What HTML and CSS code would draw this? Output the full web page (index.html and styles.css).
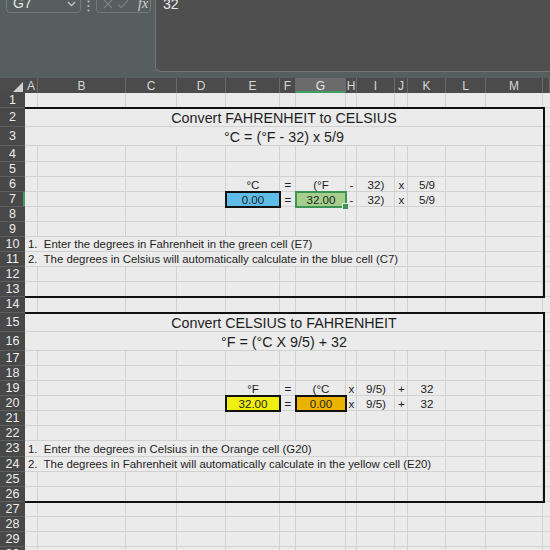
FILE: index.html
```html
<!DOCTYPE html>
<html>
<head>
<meta charset="utf-8">
<title>Temperature conversion</title>
<link rel="stylesheet" href="styles.css">
</head>
<body>
<div class="app">
  <div class="topbar">
    <div class="namebox">
      <span>G7</span>
      <svg class="chev" viewBox="0 0 9 6"><path d="M1 1 L4.5 4.6 L8 1" fill="none" stroke="#c9cccc" stroke-width="1.3"/></svg>
    </div>
    <div class="dots">
      <svg viewBox="0 0 3 13" width="3" height="13"><circle cx="1.5" cy="1.5" r="1.1" fill="#b9bdbd"/><circle cx="1.5" cy="6" r="1.1" fill="#b9bdbd"/><circle cx="1.5" cy="10.5" r="1.1" fill="#b9bdbd"/></svg>
    </div>
    <div class="fxbox">
      <svg class="ico" viewBox="0 0 10 10" width="10" height="10"><path d="M1 1 L9 9 M9 1 L1 9" stroke="#7c8484" stroke-width="1.1" fill="none"/></svg>
      <svg class="ico" viewBox="0 0 12 10" width="12" height="10"><path d="M1 5.5 L4.2 8.6 L11 1.2" stroke="#7c8484" stroke-width="1.1" fill="none"/></svg>
      <span class="fx">fx</span>
    </div>
    <div class="formula"><span>32</span></div>
  </div>

  <div class="sheet">
    <div class="row hdr">
      <div class="corner"><svg viewBox="0 0 10 10" width="10" height="10"><path d="M10 0 L10 10 L0 10 Z" fill="#cfcfcf"/></svg></div>
      <div>A</div><div>B</div><div>C</div><div>D</div><div>E</div><div>F</div><div class="hsel">G</div><div>H</div><div>I</div><div>J</div><div>K</div><div>L</div><div>M</div><div></div>
    </div>

    <div class="row"><div class="rh">1</div></div>

    <div class="box">
      <div class="row tall"><div class="rh">2</div><div class="merge title">Convert FAHRENHEIT to CELSIUS</div></div>
      <div class="row tall"><div class="rh">3</div><div class="merge title">°C = (°F - 32) x 5/9</div></div>
      <div class="row"><div class="rh">4</div></div>
      <div class="row"><div class="rh">5</div></div>
      <div class="row">
        <div class="rh">6</div>
        <div class="c cE">°C</div><div class="c cF">=</div><div class="c cG">(°F</div><div class="c cH">-</div><div class="c cI">32)</div><div class="c cJ">x</div><div class="c cK">5/9</div>
      </div>
      <div class="row">
        <div class="rh rsel">7</div>
        <div class="c cE blue">0.00</div><div class="c cF">=</div><div class="c cG green sel">32.00</div><div class="c cH">-</div><div class="c cI">32)</div><div class="c cJ">x</div><div class="c cK">5/9</div>
      </div>
      <div class="row"><div class="rh">8</div></div>
      <div class="row"><div class="rh">9</div></div>
      <div class="row"><div class="rh">10</div><div class="note toG">1.  Enter the degrees in Fahrenheit in the green cell (E7)</div></div>
      <div class="row"><div class="rh">11</div><div class="note toJ">2.  The degrees in Celsius will automatically calculate in the blue cell (C7)</div></div>
      <div class="row"><div class="rh">12</div></div>
      <div class="row"><div class="rh">13</div></div>
    </div>

    <div class="row"><div class="rh">14</div></div>

    <div class="box">
      <div class="row tall"><div class="rh">15</div><div class="merge title">Convert CELSIUS to FAHRENHEIT</div></div>
      <div class="row tall"><div class="rh">16</div><div class="merge title">°F = (°C X 9/5) + 32</div></div>
      <div class="row"><div class="rh">17</div></div>
      <div class="row"><div class="rh">18</div></div>
      <div class="row">
        <div class="rh">19</div>
        <div class="c cE">°F</div><div class="c cF">=</div><div class="c cG">(°C</div><div class="c cH">x</div><div class="c cI">9/5)</div><div class="c cJ">+</div><div class="c cK">32</div>
      </div>
      <div class="row">
        <div class="rh">20</div>
        <div class="c cE yellow">32.00</div><div class="c cF">=</div><div class="c cG orange">0.00</div><div class="c cH">x</div><div class="c cI">9/5)</div><div class="c cJ">+</div><div class="c cK">32</div>
      </div>
      <div class="row"><div class="rh">21</div></div>
      <div class="row"><div class="rh">22</div></div>
      <div class="row"><div class="rh">23</div><div class="note toG">1.  Enter the degrees in Celsius in the Orange cell (G20)</div></div>
      <div class="row"><div class="rh">24</div><div class="note toK">2.  The degrees in Fahrenheit will automatically calculate in the yellow cell (E20)</div></div>
      <div class="row"><div class="rh">25</div></div>
      <div class="row"><div class="rh">26</div></div>
    </div>

    <div class="row"><div class="rh">27</div></div>
    <div class="row"><div class="rh">28</div></div>
    <div class="row"><div class="rh">29</div></div>
    <div class="row"><div class="rh">30</div></div>
  </div>
</div>
</body>
</html>
```

FILE: styles.css
```css
* { box-sizing: border-box; margin: 0; padding: 0; }

html, body {
  width: 550px;
  height: 550px;
  overflow: hidden;
  background: #ebebeb;
}

body {
  font-family: "Liberation Sans", Arial, sans-serif;
}

/* ---------- formula bar ---------- */
.topbar {
  height: 78px;
  background: #565e5e;
  display: flex;
  align-items: flex-start;
}

.namebox {
  margin-left: 6px;
  margin-top: -8px;
  width: 75px;
  height: 21px;
  border: 1px solid #737a7a;
  border-radius: 0 0 4px 4px;
  display: flex;
  align-items: center;
  justify-content: space-between;
  padding: 0 4px 0 6px;
  color: #e2e4e4;
  font-size: 14px;
}

.chev { width: 9px; height: 6px; margin-top: 2px; }

.dots {
  width: 15px;
  display: flex;
  justify-content: center;
}

.fxbox {
  margin-top: -8px;
  width: 55px;
  height: 21px;
  border: 1px solid #737a7a;
  border-radius: 0 0 4px 4px;
  display: flex;
  align-items: center;
  padding-left: 6px;
  gap: 4px;
}

.ico { margin-top: 3px; }

.fx {
  margin-left: 5px;
  font-family: "Liberation Serif", "Times New Roman", serif;
  font-style: italic;
  font-size: 14px;
  color: #d2d4d4;
  margin-top: 2px;
}

.formula {
  margin-left: 4px;
  margin-top: -9px;
  flex: 1;
  height: 81px;
  background: #4f4f4f;
  border-left: 1px solid #707575;
  border-bottom: 1px solid #707575;
  border-bottom-left-radius: 6px;
  padding: 3px 0 0 7px;
  font-size: 14px;
  line-height: 20px;
  color: #e8e8e8;
}

/* ---------- sheet ---------- */
.sheet {
  --gl: linear-gradient(#d2d2d2, #d2d2d2);
}

.row {
  display: grid;
  grid-template-columns: 25px 13px 88px 51px 49px 54px 16px 50px 11px 38px 13px 38px 40px 57px 1fr;
  height: 15.1px;
  font-size: 11.6px;
  color: #1e1e1e;
  background:
    var(--gl) 0 100% / 100% 1px no-repeat,
    var(--gl) 37px 0 / 1px 100% no-repeat,
    var(--gl) 125px 0 / 1px 100% no-repeat,
    var(--gl) 176px 0 / 1px 100% no-repeat,
    var(--gl) 225px 0 / 1px 100% no-repeat,
    var(--gl) 279px 0 / 1px 100% no-repeat,
    var(--gl) 295px 0 / 1px 100% no-repeat,
    var(--gl) 345px 0 / 1px 100% no-repeat,
    var(--gl) 356px 0 / 1px 100% no-repeat,
    var(--gl) 394px 0 / 1px 100% no-repeat,
    var(--gl) 407px 0 / 1px 100% no-repeat,
    var(--gl) 445px 0 / 1px 100% no-repeat,
    var(--gl) 485px 0 / 1px 100% no-repeat,
    var(--gl) 542px 0 / 1px 100% no-repeat,
    #ebebeb;
}

.row.tall { height: 19.2px; }

/* column headers */
.row.hdr {
  height: 15px;
  background: #4b4b4b;
  color: #d6d6d6;
  font-size: 12px;
}

.hdr > div {
  border-right: 1px solid #6a6a6a;
  display: flex;
  align-items: center;
  justify-content: center;
  line-height: 14px;
}

.hdr > .corner {
  border-right: 0;
  align-items: flex-end;
  justify-content: flex-end;
  padding: 0 2px 1px 0;
}

.hdr > .hsel {
  background: #6b6b6b;
  color: #e6e6e6;
  box-shadow: inset 0 -2px 0 #3f9d5e;
}

/* row headers */
.rh {
  grid-column: 1;
  background: #484848;
  color: #ececec;
  border-bottom: 1px solid #5f5f5f;
  display: flex;
  align-items: center;
  justify-content: center;
  font-size: 12.5px;
}

.rh.rsel { box-shadow: inset -2px 0 0 #3f9d5e; }

/* cells */
.c {
  display: flex;
  align-items: flex-end;
  justify-content: center;
  padding-bottom: 1px;
  line-height: 13px;
  white-space: nowrap;
}

.cE { grid-column: 6; }
.cF { grid-column: 7; }
.cG { grid-column: 8; }
.cH { grid-column: 9; }
.cI { grid-column: 10; }
.cJ { grid-column: 11; }
.cK { grid-column: 12; }

.blue   { background: #5dbde8; outline: 2px solid #111; outline-offset: -1px; }
.yellow { background: #efef12; outline: 2px solid #111; outline-offset: -1px; }
.orange { background: #ebb300; outline: 2px solid #111; outline-offset: -1px; }
.green  { background: #a6cf8d; }

.sel {
  position: relative;
  outline: 2px solid #3e9455;
  outline-offset: -1px;
}

.sel::after {
  content: "";
  position: absolute;
  right: -3px;
  bottom: -3px;
  width: 5px;
  height: 5px;
  background: #3e9455;
  border: 1px solid #ebebeb;
}

/* merged title cells (A:M) */
.merge {
  grid-column: 2 / 15;
  margin-bottom: 1px;
  background: #ebebeb;
  display: flex;
  align-items: flex-end;
  justify-content: center;
}

.title {
  font-size: 14.3px;
  line-height: 16px;
  padding-bottom: 0;
}

/* overflowing instruction text */
.note {
  margin-bottom: 1px;
  margin-right: 1px;
  background: #ebebeb;
  white-space: pre;
  font-size: 11.4px;
  line-height: 13px;
  padding: 1px 0 0 3px;
  display: flex;
  align-items: flex-end;
}

.toG { grid-column: 2 / 9; }
.toJ { grid-column: 2 / 12; }
.toK { grid-column: 2 / 13; }

/* thick box borders around each converter */
.box { position: relative; }

.box::after {
  content: "";
  position: absolute;
  left: 25px;
  width: 518px;
  top: -1px;
  bottom: -1px;
  border: 2px solid #111;
  border-left: 0;
  pointer-events: none;
}
```
